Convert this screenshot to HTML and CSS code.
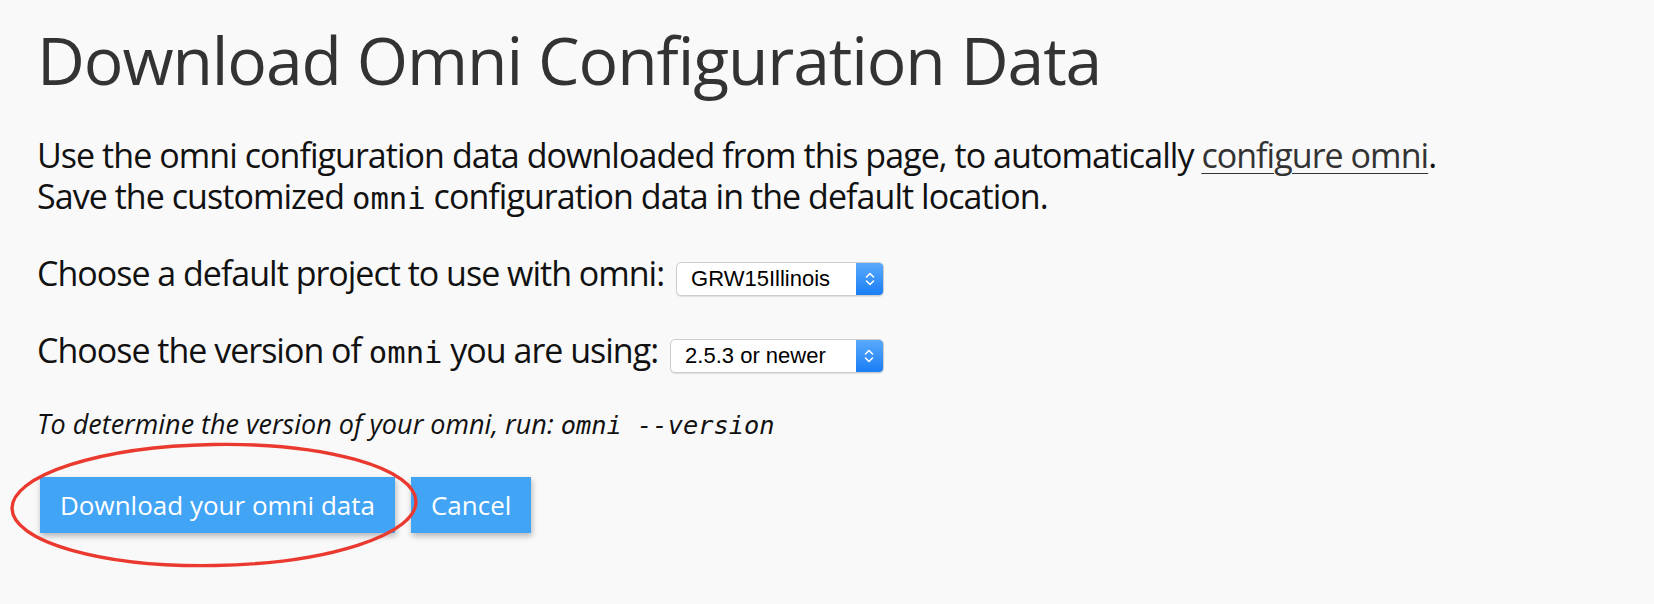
FILE: index.html
```html
<!DOCTYPE html>
<html>
<head>
<meta charset="utf-8">
<link rel="stylesheet" href="styles.css">
</head>
<body>
<main class="page">
  <h1 class="title">Download Omni Configuration Data</h1>
  <p class="intro">Use the omni configuration data downloaded from this page, to automatically <a href="#" class="link">configure omni</a>.<br>Save the customized <code class="mono">omni</code> configuration data in the default location.</p>
  <div class="field field-project">
    <span class="label">Choose a default project to use with omni:</span>
    <span class="select"><span class="select-value">GRW15Illinois</span><span class="select-arrow"><svg width="12" height="20" viewBox="0 0 12 20"><path d="M2.5 8 L6 4.5 L9.5 8 M2.5 12 L6 15.5 L9.5 12" fill="none" stroke="#fff" stroke-width="1.6" stroke-linecap="round" stroke-linejoin="round"/></svg></span></span>
  </div>
  <div class="field field-version">
    <span class="label">Choose the version of <code class="mono">omni</code> you are using:</span>
    <span class="select select-version"><span class="select-value">2.5.3 or newer</span><span class="select-arrow"><svg width="12" height="20" viewBox="0 0 12 20"><path d="M2.5 8 L6 4.5 L9.5 8 M2.5 12 L6 15.5 L9.5 12" fill="none" stroke="#fff" stroke-width="1.6" stroke-linecap="round" stroke-linejoin="round"/></svg></span></span>
  </div>
  <p class="hint">To determine the version of your omni, run: <code class="mono">omni --version</code></p>
  <div class="actions">
    <button class="btn">Download your omni data</button>
    <button class="btn">Cancel</button>
    <svg class="circle" width="412" height="130" viewBox="0 0 412 130"><ellipse cx="206" cy="65" rx="202" ry="60.5" fill="none" stroke="#ea3a30" stroke-width="3.4" transform="rotate(-1 206 65)"/></svg>
  </div>
</main>
</body>
</html>
```
FILE: styles.css
```css
html, body {
  margin: 0;
  padding: 0;
  background: #f9f9f9;
}
.page {
  padding: 15px 0 0 37px;
  font-family: "Open Sans", sans-serif;
  color: #111;
}
.title {
  margin: 0;
  font-size: 66px;
  font-weight: 400;
  letter-spacing: -1.1px;
  color: #333;
  line-height: 88px;
}
.intro {
  margin: 32px 0 0;
  font-size: 34px;
  line-height: 41px;
  letter-spacing: -0.95px;
}
.link {
  color: #333;
  text-decoration: underline;
  text-underline-offset: 5px;
  text-decoration-thickness: 1px;
}
.mono {
  font-family: "DejaVu Sans Mono", monospace;
  font-size: 0.9em;
  letter-spacing: 0;
}
.field {
  display: flex;
  align-items: baseline;
  gap: 12px;
  font-size: 34px;
  letter-spacing: -1px;
}
.field-project {
  margin-top: 34px;
}
.field-version {
  margin-top: 34px;
}
.label {
  line-height: 41px;
}
.select {
  display: inline-flex;
  align-items: stretch;
  height: 34px;
  box-sizing: border-box;
  border: 1px solid #cdcdcd;
  border-radius: 5px;
  background: #fff;
  overflow: hidden;
  font-family: "Liberation Sans", Arial, sans-serif;
  font-size: 22px;
  letter-spacing: 0;
  line-height: 32px;
  color: #000;
  box-shadow: 0 1px 1px rgba(0,0,0,0.1);
}
.select-value {
  padding: 0 26px 0 14px;
}
.select-version .select-value {
  padding-right: 30px;
}
.select-arrow {
  width: 27px;
  display: flex;
  align-items: center;
  justify-content: center;
  background: linear-gradient(#5aaafc, #1a7ef5);
}
.hint {
  margin: 32px 0 0;
  font-size: 27px;
  line-height: 37px;
  font-style: italic;
}
.hint .mono {
  font-size: 0.94em;
}
.actions {
  position: relative;
  display: flex;
  align-items: flex-start;
  gap: 16px;
  margin-top: 33px;
  padding: 0 0 44px 3px;
}
.btn {
  border: none;
  background: #42a4f5;
  color: #fff;
  font-family: "Open Sans", sans-serif;
  font-size: 26px;
  height: 56px;
  padding: 0 20px;
  box-shadow: 1px 3px 6px rgba(0,0,0,0.28);
}
.circle {
  position: absolute;
  left: -29px;
  top: -37px;
}
```
